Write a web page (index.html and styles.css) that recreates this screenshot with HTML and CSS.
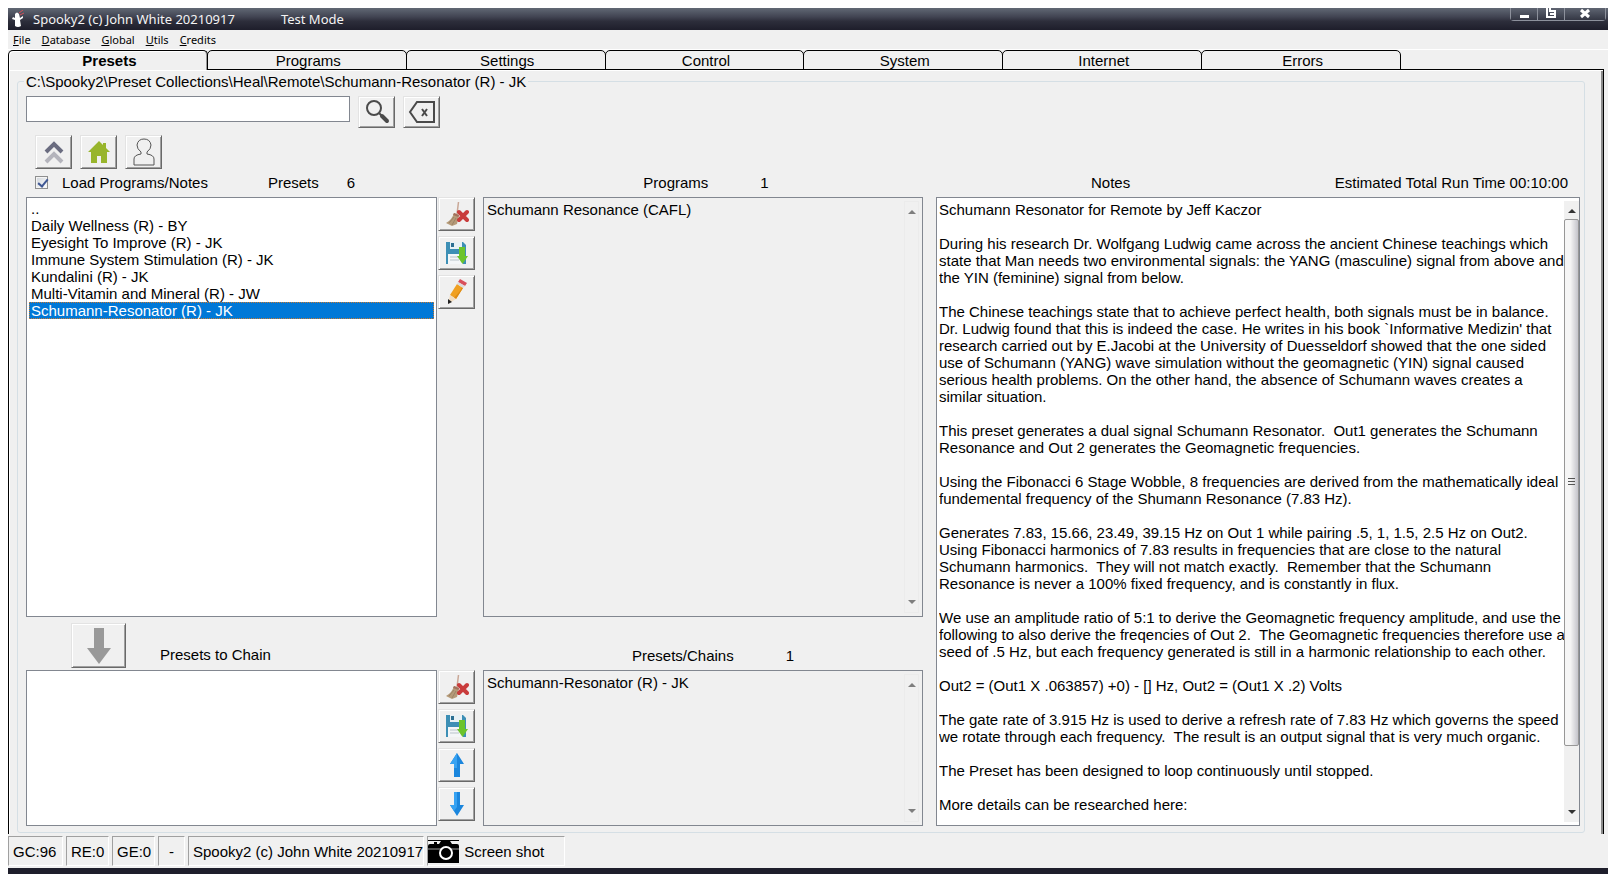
FILE: index.html
```html
<!DOCTYPE html>
<html lang="en">
<head>
    <meta charset="UTF-8">
    <meta name="viewport" content="width=device-width, initial-scale=1.0">
    <title>Spooky2 (c) John White 20210917</title>
    <link rel="stylesheet" href="styles.css">
</head>
<body>

    <!-- Shared icons -->
    <svg class="sprite" aria-hidden="true">
        <symbol id="broom" viewBox="0 0 24 26">
            <path d="M13.5 1 L12 13" stroke="#c9a796" stroke-width="1.5" fill="none"/>
            <path d="M9 12 L14 14 L12 23 L7 25 L1 22 Q7 19 9 12Z" fill="#b59a78"/>
            <path d="M9 12 L14 14 L13.500 16 L8 14Z" fill="#a3705c"/>
            <path d="M4 22 L9 16 M7 24 L11 17" stroke="#9b8468" stroke-width="1"/>
            <path d="M14 11 L22 19 M22 11 L14 19" stroke="#c93c3c" stroke-width="4" stroke-linecap="round"/>
        </symbol>
        <symbol id="disk" viewBox="0 0 24 26">
            <path d="M1 2 H18 L21 5 V24 H1Z" fill="#3d8fb5"/>
            <path d="M5 2 H17 V9 H5Z" fill="#e8f1f5"/>
            <path d="M6 3 H9 V7 H6Z" fill="#2c6f92"/>
            <path d="M3 14 H18 V24 H3Z" fill="#f4f6f8"/>
            <path d="M5 17 H14 M5 20 H14" stroke="#b9c3ca"/>
            <path d="M14 7 H20 V16 H23 L17.500 24 L12 16 H14Z" fill="#6cc42c"/>
        </symbol>
        <symbol id="up" viewBox="0 0 16 26">
            <path d="M8 1 L15 12 H11 V25 H5 V12 H1Z" fill="#1b86dd"/>
            <path d="M8 1 L1 12 H5 V16 H8Z" fill="#36a2f2"/>
        </symbol>
        <symbol id="down" viewBox="0 0 16 26">
            <path d="M8 25 L15 14 H11 V1 H5 V14 H1Z" fill="#1b86dd"/>
            <path d="M8 1 H5 V14 H1 L5 20 L8 16Z" fill="#36a2f2"/>
        </symbol>
    </svg>

    <div class="window">
        <header class="titlebar">
            <svg class="ghost" width="14" height="18" viewBox="0 0 14 18">
                <path d="M4 4 Q6 1 8 4 L9 8 L12 6 L12 8 L9 10 L10 16 Q7 18 4 16 L4 10 L1 9 L2 7 L4 8Z" fill="#fff"/>
                <path d="M8 3 L12 0 M9 5 L13 3" stroke="#d6505a"/>
            </svg>
            <span class="title">Spooky2 (c) John White 20210917</span>
            <span>Test Mode</span>
            <div class="window-buttons">
                <button aria-label="Minimize"><svg width="26" height="12" viewBox="0 0 26 12"><path d="M9 7 H18 V10 H9Z" fill="#fff"/></svg></button>
                <button aria-label="Restore"><svg width="26" height="12" viewBox="0 0 26 12"><path d="M9 0 V9 H17 V3 H12 V0 M12 6 H16" fill="none" stroke="#fff" stroke-width="2"/></svg></button>
                <button aria-label="Close" class="close"><svg width="40" height="12" viewBox="0 0 40 12"><path d="M16 2 L24 9 M24 2 L16 9" stroke="#fff" stroke-width="3"/></svg></button>
            </div>
        </header>

        <nav class="menu">
            <button><u>F</u>ile</button>
            <button><u>D</u>atabase</button>
            <button><u>G</u>lobal</button>
            <button><u>U</u>tils</button>
            <button><u>C</u>redits</button>
        </nav>

        <div class="tabs" role="tablist">
            <button class="tab active" role="tab" aria-selected="true">Presets</button>
            <button class="tab" role="tab">Programs</button>
            <button class="tab" role="tab">Settings</button>
            <button class="tab" role="tab">Control</button>
            <button class="tab" role="tab">System</button>
            <button class="tab" role="tab">Internet</button>
            <button class="tab" role="tab">Errors</button>
        </div>

        <main class="page">
            <fieldset class="frame">
                <legend>C:\Spooky2\Preset Collections\Heal\Remote\Schumann-Resonator (R) - JK</legend>

                <div class="search">
                    <input type="text" class="search-box" aria-label="Search presets">
                    <button class="btn" aria-label="Search">
                        <svg width="26" height="26" viewBox="0 0 26 26" fill="none" stroke="#4a4a4a">
                            <circle cx="10" cy="9" r="7" stroke-width="2"/>
                            <path d="M15 14 L18 17" stroke-width="2"/>
                            <path d="M18 17 L23 22" stroke-width="4" stroke-linecap="round"/>
                        </svg>
                    </button>
                    <button class="btn" aria-label="Clear search">
                        <svg width="28" height="24" viewBox="0 0 28 24" fill="none" stroke="#4a4a4a" stroke-width="2">
                            <path d="M9 2 H26 V22 H9 L2 12Z"/>
                            <path d="M14 9 L19 16 M19 9 L14 16"/>
                        </svg>
                    </button>
                </div>

                <div class="places">
                    <button class="btn" aria-label="Up">
                        <svg width="20" height="24" viewBox="0 0 20 24" fill="none" stroke-width="4">
                            <path d="M2 22 L10 14 L18 22" stroke="#b4b4bc"/>
                            <path d="M2 12 L10 4 L18 12" stroke="#6a6c80"/>
                        </svg>
                    </button>
                    <button class="btn" aria-label="Home">
                        <svg width="22" height="24" viewBox="0 0 22 24">
                            <path d="M11 1 L15 5 V3 H18 V8 L22 12 H19 V23 H13 V16 H9 V23 H3 V12 H0Z" fill="#98b52c"/>
                        </svg>
                    </button>
                    <button class="btn" aria-label="User">
                        <svg width="24" height="28" viewBox="0 0 24 28" fill="none" stroke="#555">
                            <path d="M9 14 Q5 11 5 7 Q6 1 12 1 Q18 1 19 7 Q19 11 15 14 V16 Q22 17 22 21 V27 H2 V21 Q2 17 9 16Z"/>
                        </svg>
                    </button>
                </div>

                <div class="panels">
                    <div class="left">
                        <div class="row">
                            <div class="head">
                                <input type="checkbox" id="load" checked>
                                <label for="load">Load Programs/Notes</label>
                                <label for="presets" class="presets-label">Presets</label>
                                <span class="presets-count">6</span>
                            </div>
                            <div class="head head-center">
                                <label for="programs">Programs</label>
                                <span>1</span>
                            </div>
                        </div>

                        <div class="row upper">
                            <select class="list" id="presets" size="20">
                                <option>..</option>
                                <option>Daily Wellness (R) - BY</option>
                                <option>Eyesight To Improve (R) - JK</option>
                                <option>Immune System Stimulation (R) - JK</option>
                                <option>Kundalini (R) - JK</option>
                                <option>Multi-Vitamin and Mineral (R) - JW</option>
                                <option selected>Schumann-Resonator (R) - JK</option>
                            </select>
                            <div class="tools">
                                <button class="btn" aria-label="Clear"><svg width="24" height="26"><use href="#broom"/></svg></button>
                                <button class="btn" aria-label="Save"><svg width="24" height="26"><use href="#disk"/></svg></button>
                                <button class="btn" aria-label="Edit">
                                    <svg width="22" height="28" viewBox="0 0 22 28">
                                        <path d="M4 17 L11 6 L17 10 L10 21Z" fill="#f0a022"/>
                                        <path d="M14 13 L16 9 L17 10 L10 21 L8 20Z" fill="#dd8a14"/>
                                        <path d="M12 4 L14 1 L21 5 L19 8Z" fill="#d9505c"/>
                                        <path d="M11 6 L12 4 L19 8 L17 10Z" fill="#dcdcdc"/>
                                        <path d="M4 17 L10 21 L2 26Z" fill="#f1dcc0"/>
                                        <path d="M2 21 L6 24 L2 26Z" fill="#222"/>
                                    </svg>
                                </button>
                            </div>
                            <div class="box">
                                <textarea id="programs" readonly>Schumann Resonance (CAFL)</textarea>
                                <div class="scroll disabled"><i class="arrow-up"></i><i class="arrow-down"></i></div>
                            </div>
                        </div>

                        <div class="row middle">
                            <div class="chain">
                                <button class="btn btn-large" aria-label="Add to chain">
                                    <svg width="26" height="38" viewBox="0 0 26 38"><path d="M8 1 H18 V21 H25 L13 37 L1 21 H8Z" fill="#999"/></svg>
                                </button>
                                <label for="chain">Presets to Chain</label>
                            </div>
                            <div class="head head-center head-chains">
                                <label for="chains">Presets/Chains</label>
                                <span>1</span>
                            </div>
                        </div>

                        <div class="row lower">
                            <select class="list" id="chain" size="8"></select>
                            <div class="tools">
                                <button class="btn" aria-label="Clear chain"><svg width="24" height="26"><use href="#broom"/></svg></button>
                                <button class="btn" aria-label="Save chain"><svg width="24" height="26"><use href="#disk"/></svg></button>
                                <button class="btn" aria-label="Move up"><svg width="16" height="26"><use href="#up"/></svg></button>
                                <button class="btn" aria-label="Move down"><svg width="16" height="26"><use href="#down"/></svg></button>
                            </div>
                            <div class="box">
                                <textarea id="chains" readonly>Schumann-Resonator (R) - JK</textarea>
                                <div class="scroll disabled"><i class="arrow-up"></i><i class="arrow-down"></i></div>
                            </div>
                        </div>
                    </div>

                    <div class="right">
                        <div class="head head-notes">
                            <label for="notes">Notes</label>
                            <span>Estimated Total Run Time 00:10:00</span>
                        </div>
                        <div class="box notes">
                            <textarea id="notes" readonly>Schumann Resonator for Remote by Jeff Kaczor

During his research Dr. Wolfgang Ludwig came across the ancient Chinese teachings which
state that Man needs two environmental signals: the YANG (masculine) signal from above and
the YIN (feminine) signal from below.

The Chinese teachings state that to achieve perfect health, both signals must be in balance.
Dr. Ludwig found that this is indeed the case. He writes in his book `Informative Medizin' that
research carried out by E.Jacobi at the University of Duesseldorf showed that the one sided
use of Schumann (YANG) wave simulation without the geomagnetic (YIN) signal caused
serious health problems. On the other hand, the absence of Schumann waves creates a
similar situation.

This preset generates a dual signal Schumann Resonator.  Out1 generates the Schumann
Resonance and Out 2 generates the Geomagnetic frequencies.

Using the Fibonacci 6 Stage Wobble, 8 frequencies are derived from the mathematically ideal
fundemental frequency of the Shumann Resonance (7.83 Hz).

Generates 7.83, 15.66, 23.49, 39.15 Hz on Out 1 while pairing .5, 1, 1.5, 2.5 Hz on Out2.
Using Fibonacci harmonics of 7.83 results in frequencies that are close to the natural
Schumann harmonics.  They will not match exactly.  Remember that the Schumann
Resonance is never a 100% fixed frequency, and is constantly in flux.

We use an amplitude ratio of 5:1 to derive the Geomagnetic frequency amplitude, and use the
following to also derive the freqencies of Out 2.  The Geomagnetic frequencies therefore use a
seed of .5 Hz, but each frequency generated is still in a harmonic relationship to each other.

Out2 = (Out1 X .063857) +0) - [] Hz, Out2 = (Out1 X .2) Volts

The gate rate of 3.915 Hz is used to derive a refresh rate of 7.83 Hz which governs the speed
we rotate through each frequency.  The result is an output signal that is very much organic.

The Preset has been designed to loop continuously until stopped.

More details can be researched here:</textarea>
                            <div class="scroll"><i class="arrow-up"></i><div class="track"><div class="thumb"><i class="grip"></i></div></div><i class="arrow-down"></i></div>
                        </div>
                    </div>
                </div>
            </fieldset>
        </main>

        <footer class="status">
            <span class="cell cell-gc">GC:96</span>
            <span class="cell cell-re">RE:0</span>
            <span class="cell cell-re">GE:0</span>
            <span class="cell cell-dash">-</span>
            <span class="cell cell-name">Spooky2 (c) John White 20210917</span>
            <button class="cell cell-shot">
                <svg width="31" height="23" viewBox="0 0 31 23">
                    <path d="M0 0 H31 V1 H0Z M0 22 H31 V23 H0Z" fill="#000"/>
                    <path d="M2 4 H6 V2 H9 V4 H11 L13 1 H22 L24 4 H29 Q31 4 31 6 V22 H0 V6 Q0 4 2 4Z" fill="#000"/>
                    <path d="M0 9 H31" stroke="#999"/>
                    <circle cx="18" cy="13" r="6" fill="#000" stroke="#fff" stroke-width="2"/>
                </svg>
                Screen shot
            </button>
        </footer>
    </div>

</body>
</html>
```
FILE: styles.css
```css
* {
    margin: 0;
    padding: 0;
    box-sizing: border-box;
}

body {
    font-family: "Liberation Sans", Arial, sans-serif;
    font-size: 15px;
    line-height: 17px;
    color: #000;
    background-color: #fff;
}

button,
input,
select,
textarea {
    font: inherit;
    color: inherit;
}

.sprite {
    display: block;
    width: 0;
    height: 0;
}

/* Window */
.window {
    display: flex;
    flex-direction: column;
    min-height: calc(100vh - 10px);
    margin: 8px 8px 0;
    background-color: #f0f0f0;
    border-bottom: 6px solid #1e1e2b;
    box-shadow: 0 1px 0 #8b90a8, 0 2px 0 #3a3c4c;
}

.titlebar {
    display: flex;
    align-items: center;
    height: 22px;
    padding-left: 3px;
    font-family: "Noto Sans", "Open Sans", sans-serif;
    font-size: 13px;
    color: #f4f4f4;
    background: linear-gradient(#616874, #414452 40%, #2d2e3b 60%, #1e1e2b);
}

.ghost {
    margin-right: 8px;
}

.title {
    margin-right: 46px;
}

.window-buttons {
    display: flex;
    align-self: flex-start;
    margin: 0 2px 0 auto;
    border: 1px solid #8d919c;
    border-top: none;
    border-radius: 0 0 4px 4px;
}

.window-buttons button {
    display: flex;
    background: linear-gradient(#5f6572, #343744);
    border: none;
    border-right: 1px solid #8d919c;
}

.window-buttons .close {
    border-right: none;
}

/* Menu */
.menu {
    display: flex;
    align-items: center;
    gap: 11px;
    height: 20px;
    padding-left: 5px;
    border-bottom: 1px solid #fff;
}

.menu button {
    font-family: "Noto Sans", "Open Sans", sans-serif;
    font-size: 11px;
    background: none;
    border: none;
}

/* Tabs */
.tabs {
    display: flex;
    height: 20px;
    padding-right: 13%;
    margin-bottom: -1px;
}

.tab {
    flex: 1;
    margin-right: -1px;
    padding-left: 3px;
    background-color: #f0f0f0;
    border: 1px solid #000;
    border-radius: 5px 5px 0 0;
}

.tab.active {
    z-index: 1;
    font-weight: bold;
    border-bottom: none;
    box-shadow: inset 1px 1px 0 #fff, inset -1px 0 0 #999;
}

.page {
    flex: 1;
    display: flex;
    margin-right: 4px;
    padding: 3px 18px 1px 8px;
    border: 1px solid #000;
    border-bottom: none;
    box-shadow: inset 1px 1px 0 #fff, inset -2px 0 0 #8a8a8a;
}

.frame {
    flex: 1;
    display: flex;
    flex-direction: column;
    min-width: 0;
    padding: 6px 4px 6px 8px;
    border: 1px solid #d5dfe5;
    border-radius: 3px;
}

legend {
    margin-left: -2px;
    padding: 0 2px;
}

/* 3D buttons */
.btn {
    display: flex;
    align-items: center;
    justify-content: center;
    flex: none;
    width: 37px;
    height: 34px;
    background-color: #f0f0f0;
    border: 1px solid;
    border-color: #e3e3e3 #696969 #696969 #e3e3e3;
    box-shadow: inset 1px 1px 0 #fff, inset -1px -1px 0 #a0a0a0;
}

.btn-large {
    width: 55px;
    height: 45px;
}

/* Search and places */
.search {
    display: flex;
    gap: 8px;
    margin-bottom: 7px;
}

.search .btn {
    height: 32px;
}

.search-box {
    width: 324px;
    height: 26px;
    padding: 0 4px;
    background-color: #fff;
    border: 1px solid #828790;
}

.places {
    display: flex;
    gap: 8px;
    padding-left: 9px;
    margin-bottom: 4px;
}

/* Panels */
.panels {
    flex: 1;
    display: flex;
    gap: 13px;
}

.left {
    flex: 897 1 0;
    display: flex;
    flex-direction: column;
    min-width: 0;
}

.right {
    flex: 644 1 0;
    display: flex;
    flex-direction: column;
    min-width: 0;
}

.row {
    display: grid;
    grid-template-columns: 411fr 46px 440fr;
}

.upper {
    flex: 420 1 0;
}

.lower {
    flex: 156 1 0;
}

.head {
    display: flex;
    align-items: center;
    height: 24px;
    padding-bottom: 5px;
}

.row .head:first-child {
    padding-left: 9px;
}

.head input {
    appearance: none;
    width: 13px;
    height: 13px;
    margin-right: 14px;
    background: linear-gradient(135deg, #cfd4da, #fff);
    border: 1px solid #8e8f8f;
    box-shadow: inset 0 0 0 1px #f4f4f4;
}

.head input:checked::after {
    content: "";
    display: block;
    width: 4px;
    height: 8px;
    margin: 0 0 0 4px;
    border: solid #3f5793;
    border-width: 0 2px 2px 0;
    transform: rotate(40deg);
}

.presets-label {
    margin-left: 60px;
}

.presets-count {
    margin-left: 28px;
}

.head-center {
    grid-column: 3;
    justify-content: center;
    gap: 52px;
    padding-left: 6px;
}

.head-chains {
    align-self: end;
    padding-left: 20px;
}

.head-notes {
    justify-content: space-between;
    padding-left: 155px;
    padding-right: 12px;
}

.middle {
    height: 53px;
}

.chain {
    display: flex;
    align-items: center;
    gap: 34px;
    padding: 4px 0 0 45px;
}

.chain label {
    align-self: flex-end;
    padding-bottom: 7px;
}

/* Lists */
.list {
    width: 100%;
    height: 100%;
    padding: 2px;
    overflow: hidden;
    background-color: #fff;
    border: 1px solid #828790;
    border-radius: 0;
    outline: none;
}

.list option {
    height: 17px;
    min-height: 17px;
    padding: 0 2px;
    line-height: 17px;
}

.list option:checked {
    color: #fff;
    background: #0078d7 linear-gradient(#0078d7, #0078d7);
    outline: 1px dotted #c87a30;
    outline-offset: -1px;
}

.tools {
    display: flex;
    flex-direction: column;
    gap: 5px;
    padding-left: 1px;
}

.box {
    display: flex;
    padding: 3px;
    border: 1px solid #828790;
}

.box textarea {
    flex: 1;
    min-width: 0;
    resize: none;
    overflow: hidden;
    white-space: pre;
    background: none;
    border: none;
    outline: none;
}

.notes {
    flex: 1;
    padding: 3px 0 3px 2px;
    background-color: #fff;
}

/* Scrollbars */
.scroll {
    display: flex;
    flex-direction: column;
    align-items: center;
    justify-content: space-between;
    width: 15px;
    padding: 8px 0;
    background-color: #f0f0f0;
}

.scroll.disabled {
    border: 1px solid #e8e8e8;
    opacity: 0.6;
}

.arrow-up,
.arrow-down {
    border: 4px solid transparent;
}

.arrow-up {
    border-top: none;
    border-bottom-color: #333;
}

.arrow-down {
    border-bottom: none;
    border-top-color: #333;
}

.track {
    flex: 1;
    align-self: stretch;
    margin: 6px 0;
}

.thumb {
    display: flex;
    align-items: center;
    justify-content: center;
    height: 90%;
    background: linear-gradient(90deg, #f6f6f6 40%, #c4c4cb);
    border: 1px solid #979797;
    border-radius: 2px;
}

.grip {
    width: 7px;
    height: 8px;
    background: repeating-linear-gradient(#555 0 1px, transparent 1px 3px);
}

/* Status bar */
.status {
    display: flex;
    gap: 3px;
    padding: 2px 0;
}

.cell {
    display: flex;
    align-items: center;
    height: 30px;
    padding: 0 4px;
    background: none;
    border: 1px solid;
    border-color: #a0a0a0 #fff #fff #a0a0a0;
}

.cell-gc {
    width: 55px;
}

.cell-re {
    width: 43px;
}

.cell-dash {
    justify-content: center;
    width: 27px;
}

.cell-name {
    padding-right: 0;
}

.cell-shot {
    gap: 5px;
    width: 138px;
    padding: 0;
}
```
